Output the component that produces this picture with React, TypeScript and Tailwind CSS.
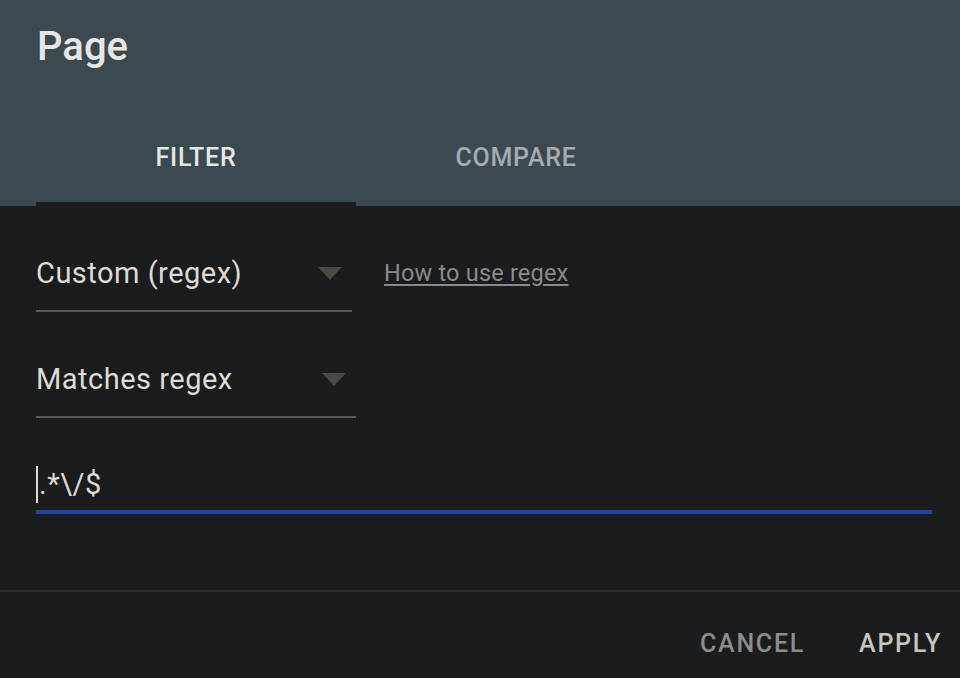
const font = { fontFamily: "Roboto, 'Liberation Sans', sans-serif" };

function Caret() {
  return (
    <svg width="24" height="13" viewBox="0 0 24 13" className="shrink-0">
      <path d="M0 0 L24 0 L12 13 Z" fill="#4a4943" />
    </svg>
  );
}

function Select({ label, width }: { label: string; width: string }) {
  return (
    <div
      className={`flex items-center justify-between border-b-2 border-[#57585a] pb-[19px] pr-[10px] ${width}`}
    >
      <span className="text-[29px] leading-[36px] tracking-[0.5px] text-[#dedad4]">{label}</span>
      <Caret />
    </div>
  );
}

export default function App() {
  return (
    <div className="flex h-[678px] w-[960px] flex-col bg-[#1b1c1e]" style={font}>
      <header className="flex h-[206px] flex-col bg-[#3b4a51]">
        <h1 className="pl-[37px] pt-[23px] text-[40px] font-medium leading-[48px] text-[#e8e6e3]">
          Page
        </h1>
        <div className="ml-[36px] mt-[72px] flex">
          <div className="w-[320px] border-b-4 border-[#1b1c1e] pb-[29px] text-center text-[25px] font-medium leading-[30px] tracking-[0.03em] text-[#e8e6e3]">
            FILTER
          </div>
          <div className="w-[320px] pb-[29px] text-center text-[25px] font-medium leading-[30px] tracking-[0.03em] text-[#a8abad]">
            COMPARE
          </div>
        </div>
      </header>

      <main className="flex flex-col pl-[36px] pr-[28px]">
        <div className="mt-[49px] flex items-start gap-[32px]">
          <Select label="Custom (regex)" width="w-[316px]" />
          <a
            href="#"
            className="text-[23.5px] leading-[36px] tracking-[0.2px] text-[#8a8a8a] underline underline-offset-[3px]"
          >
            How to use regex
          </a>
        </div>
        <div className="mt-[49px]">
          <Select label="Matches regex" width="w-[320px]" />
        </div>
        <div className="mt-[48px] flex items-center border-b-4 border-[#2144a0] pb-[7px]">
          <span className="mr-[1px] inline-block h-[37px] w-[2px] bg-[#e0ddd8]" />
          <span className="text-[29px] leading-[37px] tracking-[0.5px] text-[#dedad4]">.*\/$</span>
        </div>
      </main>

      <footer className="mt-auto flex flex-col">
        <div className="h-[2px] bg-[#2b2c2e]" />
        <div className="flex items-center justify-end gap-[54px] pb-[19px] pr-[18px] pt-[37px]">
          <button className="text-[25px] font-medium leading-[30px] tracking-[0.07em] text-[#8c8c8c]">
            CANCEL
          </button>
          <button className="text-[25px] font-medium leading-[30px] tracking-[0.07em] text-[#c9c4bc]">
            APPLY
          </button>
        </div>
      </footer>
    </div>
  );
}
